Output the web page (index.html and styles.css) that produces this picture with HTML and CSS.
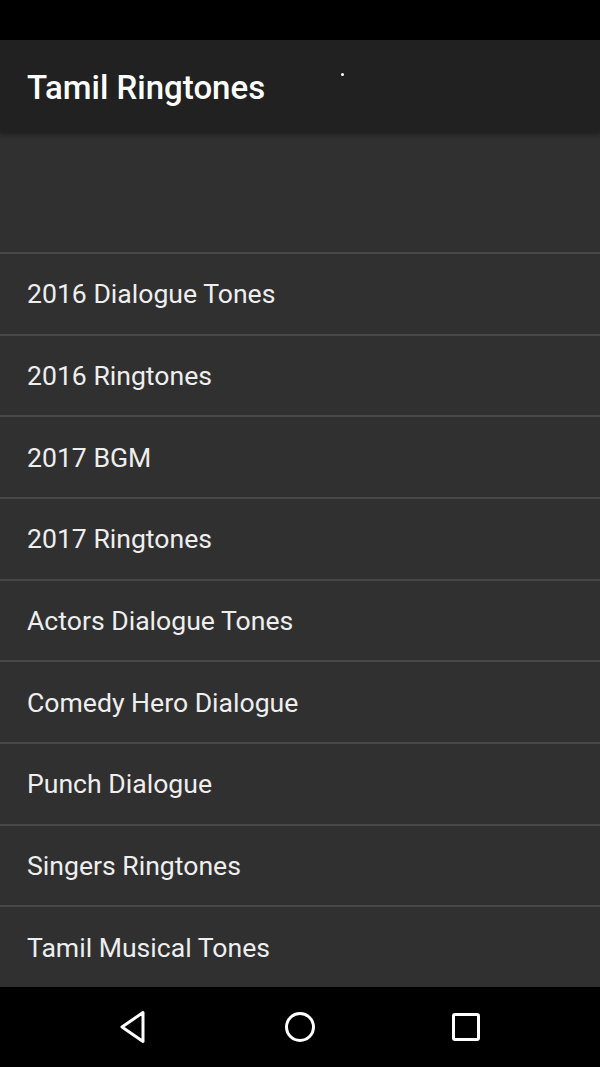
FILE: index.html
```html
<!DOCTYPE html>
<html lang="en">
<head>
  <meta charset="UTF-8" />
  <meta name="viewport" content="width=device-width, initial-scale=1" />
  <title>Tamil Ringtones</title>
  <link rel="stylesheet" href="styles.css">
</head>
<body>
  <div class="status-bar"></div>

  <header class="app-bar">
    <h1>Tamil Ringtones</h1>
    <span class="dot"></span>
  </header>

  <main class="content">
    <div class="banner"></div>
    <ul class="list">
      <li>2016 Dialogue Tones</li>
      <li>2016 Ringtones</li>
      <li>2017 BGM</li>
      <li>2017 Ringtones</li>
      <li>Actors Dialogue Tones</li>
      <li>Comedy Hero Dialogue</li>
      <li>Punch Dialogue</li>
      <li>Singers Ringtones</li>
      <li>Tamil Musical Tones</li>
    </ul>
  </main>

  <nav class="nav-bar">
    <svg class="nav-icon" viewBox="0 0 30 34" width="30" height="34">
      <path d="M25 2.5 L4 17 L25 31.5 Z" fill="none" stroke="#fff" stroke-width="3" stroke-linejoin="round" />
    </svg>
    <svg class="nav-icon" viewBox="0 0 32 32" width="32" height="32">
      <circle cx="16" cy="16" r="13.5" fill="none" stroke="#fff" stroke-width="3" />
    </svg>
    <svg class="nav-icon" viewBox="0 0 30 30" width="30" height="30">
      <rect x="2.5" y="2.5" width="25" height="25" rx="1.5" fill="none" stroke="#fff" stroke-width="3" />
    </svg>
  </nav>
</body>
</html>
```

FILE: styles.css
```css
html, body {
  margin: 0; padding: 0;
  height: 100%;
  background: #303030;
  font-family: Roboto, 'Noto Sans', sans-serif;
  overflow: hidden;
}
* { box-sizing: border-box; }

.status-bar {
  height: 40px;
  background: #000;
}

.app-bar {
  position: relative;
  height: 93px;
  background: #212121;
  display: flex;
  align-items: center;
  padding: 0 27px;
  box-shadow: 0 2px 5px rgba(0,0,0,0.35);
  z-index: 1;
}
.app-bar h1 {
  margin: 0;
  color: #fff;
  font-size: 33px;
  font-weight: 500;
  padding-top: 2px;
}
.dot {
  position: absolute;
  left: 341px;
  top: 33px;
  width: 3px;
  height: 3px;
  border-radius: 50%;
  background: #fff;
}

.content {
  height: 854px;
  background: #303030;
}
.banner {
  height: 119px;
}
.list {
  list-style: none;
  margin: 0; padding: 0;
}
.list li {
  height: 81.67px;
  display: flex;
  align-items: center;
  padding-left: 27px;
  border-top: 2px solid #474747;
  color: #eeeeee;
  font-size: 26.6px;
}

.nav-bar {
  height: 80px;
  background: #000;
  display: flex;
  align-items: center;
  justify-content: space-between;
  padding: 0 119px 0 118px;
}
.nav-icon { display: block; }
```
